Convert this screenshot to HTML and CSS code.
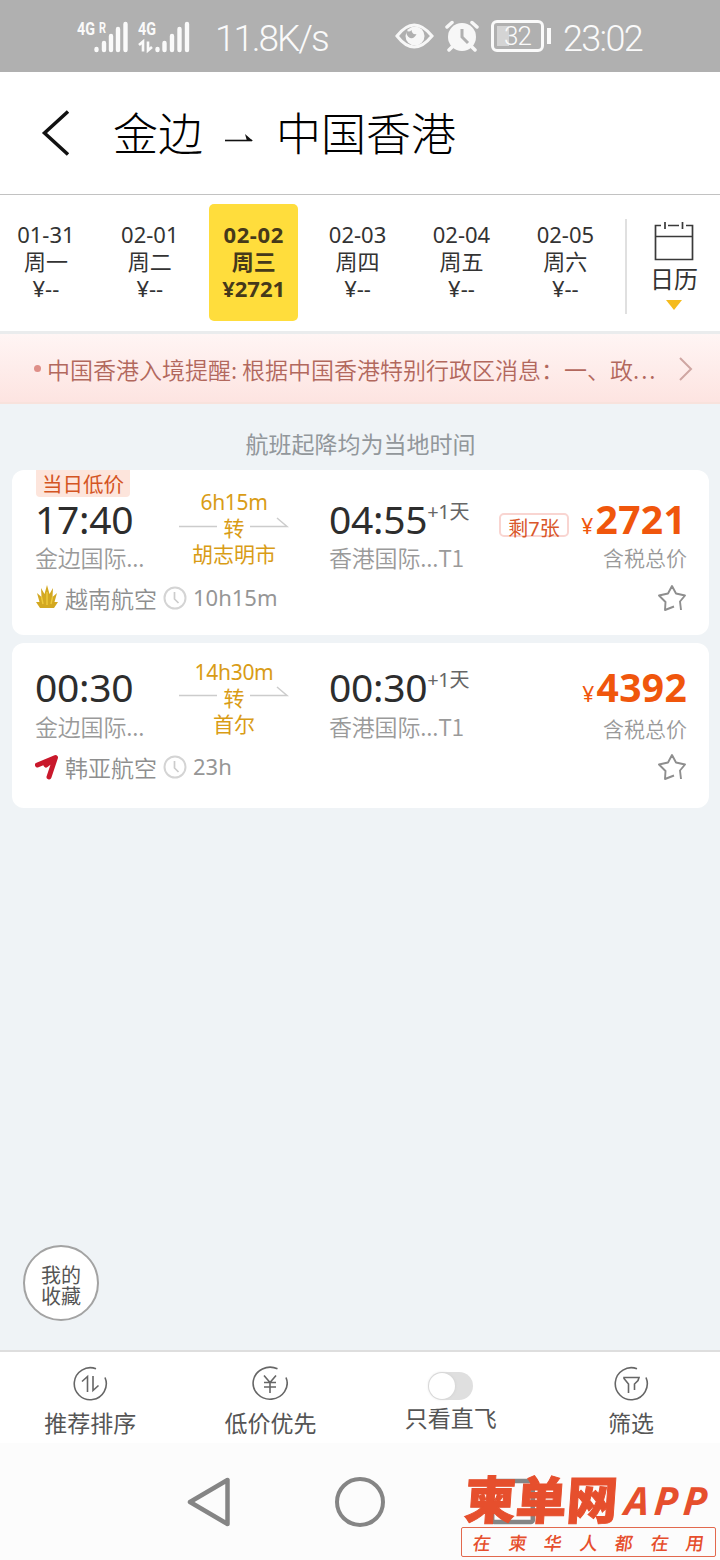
FILE: index.html
```
<!DOCTYPE html>
<html lang="zh-CN">
<head>
<meta charset="utf-8">
<title>金边 - 中国香港</title>
<link rel="stylesheet" href="styles.css">
</head>
<body>
<div class="screen">
  <div class="status">
    <svg class="signals" width="114" height="36" viewBox="0 0 114 36">
      <g class="net"><text x="0" y="16" textLength="18" lengthAdjust="spacingAndGlyphs">4G</text><text class="roam" x="22" y="14" textLength="7" lengthAdjust="spacingAndGlyphs">R</text><text x="61" y="16" textLength="18" lengthAdjust="spacingAndGlyphs">4G</text></g>
      <path class="bars" d="M19.5 30v1M27 24v7M34 17v14M41 10v21M48.500 5v26M80.500 30v1M87.500 24v7M95 17v14M102.500 10v21M110 5v26"/>
      <path class="data" d="M62 26l4-3.500v10M71 22.500v9l4-3.500"/>
    </svg>
    <span class="speed">11.8K/s</span>
    <svg class="eye" width="40" height="30" viewBox="0 0 40 30"><path d="M2 15Q19 -7 37 15Q19 37 2 15Z" fill="none" stroke="#f7f7f7" stroke-width="3"/><circle cx="20" cy="15" r="9.500" fill="#f7f7f7"/><path d="M11 9q3 3 5.500 0q.5 5 5 4q-2 5-6.500 4q-4-2-4-8z" fill="#b0b0b0"/></svg>
    <svg class="alarm" width="34" height="32" viewBox="0 0 34 32"><circle cx="17" cy="17" r="14" fill="#f7f7f7"/><path d="M2 7l5-4.500M27 2.500l5 4.500M7 27l-3 3M27 27l3 3" stroke="#f7f7f7" stroke-width="3.500" stroke-linecap="round"/><path d="M17 9v8l6 6" fill="none" stroke="#b0b0b0" stroke-width="3"/></svg>
    <span class="battery"><i class="charge"></i><b>32</b></span><i class="cap"></i>
    <span class="clock">23:02</span>
  </div>

  <div class="header">
    <svg class="back" width="30" height="46" viewBox="0 0 30 46"><path d="M27 1.500L3.500 23L27 44.500" fill="none" stroke="#111" stroke-width="3.500"/></svg>
    <h1>金边</h1>
    <svg class="to" width="28" height="8" viewBox="0 0 28 8"><path d="M0 6.500H27" fill="none" stroke="#111" stroke-width="1.600"/><path d="M20 0L28 7H22Z" fill="#111"/></svg>
    <h1>中国香港</h1>
  </div>

  <div class="dates">
    <div class="days">
      <div class="day"><span>01-31</span><span>周一</span><span>¥--</span></div>
      <div class="day"><span>02-01</span><span>周二</span><span>¥--</span></div>
      <div class="day on"><span>02-02</span><span>周三</span><span>¥2721</span></div>
      <div class="day"><span>02-03</span><span>周四</span><span>¥--</span></div>
      <div class="day"><span>02-04</span><span>周五</span><span>¥--</span></div>
      <div class="day"><span>02-05</span><span>周六</span><span>¥--</span></div>
    </div>
    <div class="calendar">
      <svg width="40" height="40" viewBox="0 0 40 40"><path d="M7 4.500H1.500V38.500H38.500V4.500H32M14 4.500H25M1.500 15.500H38.500M11 1v7M28.500 1v7" fill="none" stroke="#3a3a3a" stroke-width="1.700"/></svg>
      <span>日历</span>
      <i></i>
    </div>
  </div>

  <div class="notice">
    <i class="dot"></i>
    <p><span class="lead">中国香港入境提醒:</span>根据中国香港特别行政区消息：一、政<span class="more">...</span></p>
    <svg width="16" height="24" viewBox="0 0 16 24"><path d="M2 1L13 12L2 23" fill="none" stroke="#cfa6a2" stroke-width="2"/></svg>
  </div>

  <div class="list">
    <p class="hint">航班起降均为当地时间</p>

    <div class="card">
      <span class="low">当日低价</span>
      <div class="legs">
        <div class="stop"><span class="time">17:40</span><span class="place">金边国际...</span></div>
        <div class="via">
          <span>6h15m</span>
          <span class="turn"><svg width="110" height="12" viewBox="0 0 110 12"><path d="M0 10.500H38M71 10.500H108L98 2" fill="none" stroke="#ccc" stroke-width="1.500"/></svg><b>转</b></span>
          <span>胡志明市</span>
        </div>
        <div class="stop"><span class="time">04:55<sup>+1天</sup></span><span class="place">香港国际...T1</span></div>
        <span class="left"><b>剩7张</b></span>
        <div class="fare"><span class="price even"><small>¥</small>2721</span><span class="tax">含税总价</span></div>
      </div>
      <div class="airline">
        <svg class="logo" width="24" height="26" viewBox="0 0 24 26"><path d="M12 0L14.500 9L18 3L17.500 12L22 8L19.500 17H23L19 23H5L1 17H4.500L2 8L6.500 12L6 3L9.500 9Z" fill="#d3a821"/><path d="M8 19L6.500 12M12 20V7M16 19L17.500 12" stroke="#efcb3c" stroke-width="1.400"/></svg>
        <span class="name">越南航空</span>
        <svg class="dial" width="24" height="24" viewBox="0 0 24 24"><circle cx="12" cy="12" r="10.500" fill="none" stroke="#d4d4d4" stroke-width="2"/><path d="M11.500 6v7l4 4" fill="none" stroke="#ccc" stroke-width="1.700"/></svg>
        <span class="total">10h15m</span>
        <svg class="star" width="30" height="28" viewBox="0 0 30 28"><path d="M17 22.500L8 26L8.500 18L2 11.500L11 9.500L15 2L19 9.500L28 11.500L23 17.500L24 26" fill="none" stroke="#8e8e8e" stroke-width="1.900" stroke-linejoin="round"/></svg>
      </div>
    </div>

    <div class="card second">
      <div class="legs">
        <div class="stop"><span class="time">00:30</span><span class="place">金边国际...</span></div>
        <div class="via">
          <span>14h30m</span>
          <span class="turn"><svg width="110" height="12" viewBox="0 0 110 12"><path d="M0 10.500H38M71 10.500H108L98 2" fill="none" stroke="#ccc" stroke-width="1.500"/></svg><b>转</b></span>
          <span>首尔</span>
        </div>
        <div class="stop"><span class="time">00:30<sup>+1天</sup></span><span class="place">香港国际...T1</span></div>
        <div class="fare"><span class="price"><small>¥</small>4392</span><span class="tax">含税总价</span></div>
      </div>
      <div class="airline">
        <svg class="logo" width="24" height="26" viewBox="0 0 24 26"><path d="M2.500 11L20.500 3.500L14 23M20 4L11 11" fill="none" stroke="#c9182b" stroke-width="5" stroke-linecap="round" stroke-linejoin="round"/></svg>
        <span class="name">韩亚航空</span>
        <svg class="dial" width="24" height="24" viewBox="0 0 24 24"><circle cx="12" cy="12" r="10.500" fill="none" stroke="#d4d4d4" stroke-width="2"/><path d="M11.500 6v7l4 4" fill="none" stroke="#ccc" stroke-width="1.700"/></svg>
        <span class="total">23h</span>
        <svg class="star" width="30" height="28" viewBox="0 0 30 28"><path d="M17 22.500L8 26L8.500 18L2 11.500L11 9.500L15 2L19 9.500L28 11.500L23 17.500L24 26" fill="none" stroke="#8e8e8e" stroke-width="1.900" stroke-linejoin="round"/></svg>
      </div>
    </div>

    <div class="favorites"><span>我的</span><span>收藏</span></div>
  </div>

  <div class="tabs">
    <div class="tab">
      <svg width="36" height="36" viewBox="0 0 36 36"><path d="M24 2.800A16 16 0 1 0 33 11.500M10 15.500L15.500 10.500V26M21 10V24.500L26.500 19.500" fill="none" stroke="#666" stroke-width="1.600"/></svg>
      <span>推荐排序</span>
    </div>
    <div class="tab">
      <svg width="36" height="36" viewBox="0 0 36 36"><path d="M25.500 2.800A17 16 0 1 0 34 11.500M12 9.500L18 16.500L24 9.500M12 16.500H24M12 21H24M18 16.500V27" fill="none" stroke="#666" stroke-width="1.600"/></svg>
      <span>低价优先</span>
    </div>
    <div class="tab direct">
      <div class="switch"><i></i></div>
      <span>只看直飞</span>
    </div>
    <div class="tab">
      <svg width="36" height="36" viewBox="0 0 36 36"><path d="M24 2.800A16 16 0 1 0 33 11.500M15.500 27V18L11 12.500V11.500H26L25 14.500L21.500 18V24" fill="none" stroke="#666" stroke-width="1.600"/></svg>
      <span>筛选</span>
    </div>
  </div>

  <div class="nav">
    <svg width="46" height="52" viewBox="0 0 46 52"><path d="M42.500 4V48L5 26Z" fill="none" stroke="#858585" stroke-width="4.500" stroke-linejoin="round"/></svg>
    <svg width="52" height="52" viewBox="0 0 52 52"><circle cx="26" cy="26" r="23" fill="none" stroke="#858585" stroke-width="4"/></svg>
    <svg width="46" height="52" viewBox="0 0 46 52"><rect x="3.200" y="5" width="40.600" height="41" rx="2" fill="none" stroke="#858585" stroke-width="4.500"/></svg>
    <div class="mark">
      <div class="brand"><b class="cn">柬单网</b><b class="app">APP</b></div>
      <div class="slogan"><b>在</b><b>柬</b><b>华</b><b>人</b><b>都</b><b>在</b><b>用</b></div>
    </div>
  </div>
</div>
</body>
</html>
```
FILE: styles.css
```
* { box-sizing: border-box; }
body { margin: 0; font-family: "Noto Sans", "Noto Sans CJK SC", sans-serif; }
h1, p { margin: 0; }
svg { display: block; flex: none; }
.screen { width: 720px; height: 1560px; display: flex; flex-direction: column; overflow: hidden; background: #eff3f6; }

.status { height: 72px; flex: none; display: flex; align-items: center; background: #b0b0b0; color: #fafafa; padding-left: 77px; font-family: Roboto, sans-serif; font-weight: 300; }
.signals { margin-top: 2px; overflow: visible; }
.net { font: 700 19px Roboto, sans-serif; fill: #fafafa; }
.roam { font-size: 14px; }
.bars { stroke: #fafafa; stroke-width: 4.400; stroke-linecap: round; fill: none; }
.data { stroke: #fafafa; stroke-width: 2.600; fill: none; }
.speed { width: 115px; margin-left: 24px; font-size: 37px; letter-spacing: -2.100px; margin-top: 5px; white-space: nowrap; }
.eye { margin-left: 65px; }
.alarm { margin-left: 10px; }
.battery { position: relative; width: 53px; height: 32px; margin-left: 12px; border: 3px solid #fafafa; border-radius: 6px; display: flex; align-items: center; justify-content: center; font-size: 26px; }
.battery b { position: relative; font-weight: 300; letter-spacing: -1px; }
.charge { position: absolute; left: 3px; top: 3px; width: 12px; height: 20px; background: #d4d4d4; }
.cap { width: 4px; height: 16px; margin-left: 3px; background: #fafafa; }
.clock { margin-left: 12px; font-size: 36px; letter-spacing: -1.700px; margin-top: 5px; }

.header { height: 123px; flex: none; display: flex; align-items: center; padding-left: 41px; background: #fff; border-bottom: 1px solid #c2c2c2; }
.header h1 { font: 300 45px/60px "Noto Sans CJK SC", sans-serif; color: #000; padding-bottom: 3px; }
.back { margin-right: 42px; }
.to { margin: 10px 23px 0 22px; }

.dates { height: 139px; flex: none; display: flex; background: #fff; border-bottom: 3px solid #eaeced; color: #333; }
.days { display: flex; margin-left: -6px; padding: 9px 0 0; width: 631px; }
.day { width: 89px; height: 117px; margin: 0 7.500px 0 7.400px; flex: none; display: flex; flex-direction: column; align-items: center; padding-top: 17px; border-radius: 5px; font-size: 22px; line-height: 27px; }
.day span { display: block; height: 27px; }
.on { background: #ffdd3c; font-weight: 700; color: #45391a; }
.on span:first-child { letter-spacing: .6px; }
.calendar { margin-top: 24px; height: 95px; flex: 1; border-left: 2px solid #e0e0e0; display: flex; flex-direction: column; align-items: center; padding-top: 2px; font: 24px/32px "Noto Sans CJK SC", sans-serif; padding-left: 1px; }
.calendar span { margin-top: 1px; }
.calendar i { width: 0; border: 8px solid transparent; border-top: 10px solid #f5bb1d; border-bottom: 0; margin-top: 6px; }

.notice { height: 70px; flex: none; display: flex; align-items: center; padding: 1px 26px 0 34px; background: linear-gradient(#fff5f4, #fde4e1); border-bottom: 2px solid #f8e2dc; color: #b2685d; font: 300 23px/34px "Noto Sans CJK SC", sans-serif; }
.dot { width: 7px; height: 7px; border-radius: 50%; background: #df8f88; margin-right: 6px; }
.notice p { flex: 1; white-space: nowrap; font-weight: 350; }
.lead { display: inline-block; width: 195px; }
.more { letter-spacing: 2px; }

.list { flex: 1; position: relative; padding: 0 11px 0 12px; }
.hint { height: 66px; padding-top: 22px; text-align: center; font: 23px/34px "Noto Sans CJK SC", sans-serif; color: #92979b; }
.card { position: relative; height: 165px; padding: 0 22px 0 23px; background: #fff; border-radius: 12px; }
.card + .card { margin-top: 8px; }
.low { position: absolute; left: 24px; top: 0; width: 94px; height: 27px; background: #fde5dc; border-radius: 0 0 4px 4px; text-align: center; color: #d45422; font: 20.500px/26px "Noto Sans CJK SC", sans-serif; }
.legs { height: 114px; padding-top: 31px; display: flex; }
.stop { width: 144px; display: flex; flex-direction: column; }
.time { height: 38px; font-size: 39px; line-height: 36px; letter-spacing: -.3px; color: #2d2d2d; white-space: nowrap; }
.time sup { font-size: 20px; line-height: 20px; vertical-align: 15px; color: #666; }
.place { margin-top: 3px; font: 350 23px/30px "Noto Sans CJK SC", sans-serif; letter-spacing: -.2px; color: #9a9a9a; white-space: nowrap; }
.via { width: 110px; margin-right: 40px; margin-top: -12.500px; display: flex; flex-direction: column; align-items: center; color: #d99c16; font-size: 21px; line-height: 26px; white-space: nowrap; }
.via > span { height: 26px; }
.via > span:first-child { font-size: 21px; letter-spacing: -.3px; }
.turn { position: relative; width: 110px; display: flex; justify-content: center; }
.turn svg { position: absolute; left: 0; top: 1px; }
.turn b { font-weight: 400; }
.left { width: 70px; height: 24px; margin: 12px 0 0 26px; border: 2px solid #f9d5d1; border-radius: 5px; display: flex; justify-content: center; color: #d9572b; font-size: 20px; line-height: 27px; white-space: nowrap; }
.left b { font-weight: 400; }
.fare { margin-left: auto; display: flex; flex-direction: column; align-items: flex-end; }
.price { height: 38px; color: #f0560c; font-weight: 700; font-size: 39px; line-height: 36px; letter-spacing: .3px; white-space: nowrap; }
.even { padding-right: 1px; }
.price small { font-size: 21px; font-weight: 400; margin-right: 2px; }
.tax { margin-top: 3px; font: 350 21px/30px "Noto Sans CJK SC", sans-serif; color: #9a9a9a; }
.airline { height: 28px; display: flex; align-items: center; color: #969696; }
.name { margin-left: 6px; width: 98px; font: 350 23px/28px "Noto Sans CJK SC", sans-serif; color: #8e8e8e; }
.total { margin-left: 6px; font-size: 22px; line-height: 26px; height: 28px; }
.star { margin-left: auto; }
.second .legs { height: 110px; padding-top: 26px; }
.second .via { margin-top: -10px; }
.second .turn svg { top: 0; }
.second .place { margin-top: 4px; }
.second .tax { margin-top: 6px; }

.favorites { position: absolute; left: 23px; bottom: 29px; width: 76px; height: 76px; border: 2px solid #a3a3a3; border-radius: 50%; background: #fff; display: flex; flex-direction: column; align-items: center; justify-content: center; padding-top: 4px; font: 20px/21px "Noto Sans CJK SC", sans-serif; color: #555; }

.tabs { height: 93px; flex: none; border-top: 2px solid #dedede; background: #fff; display: grid; grid-template-columns: repeat(4, 180.300px); padding-top: 14px; color: #555; font: 23px/30px "Noto Sans CJK SC", sans-serif; }
.tab { display: flex; flex-direction: column; align-items: center; gap: 5px; }
.direct { padding-top: 6px; gap: 2px; }
.switch { width: 45px; height: 28px; border-radius: 14px; background: #dfdfdf; }
.switch i { display: block; width: 26px; height: 26px; margin: 1px 0 0 1px; border-radius: 50%; background: #fff; box-shadow: 0 0 3px #ccc; }

.nav { position: relative; height: 117px; flex: none; background: #fcfcfc; display: flex; justify-content: center; gap: 103px; padding-top: 33px; }
.mark { position: absolute; left: 461px; top: 27px; width: 255px; color: #e64f2d; font-family: "Noto Sans CJK SC", sans-serif; }
.brand { display: flex; height: 57px; line-height: 54px; transform: skewX(-4deg); }
.cn { width: 164px; padding-left: 4px; font-size: 51px; font-weight: 900; font-style: normal; -webkit-text-stroke: 1px #e64f2d; }
.app { font: italic 700 39px/60px "Noto Sans", sans-serif; letter-spacing: 5px; }
.slogan { height: 30px; border: 1.500px solid #e2694e; border-radius: 2px; display: flex; justify-content: space-between; padding: 0 11px; font-size: 18px; line-height: 28px; }
.slogan b { font-weight: 500; transform: skewX(-8deg); }
```
